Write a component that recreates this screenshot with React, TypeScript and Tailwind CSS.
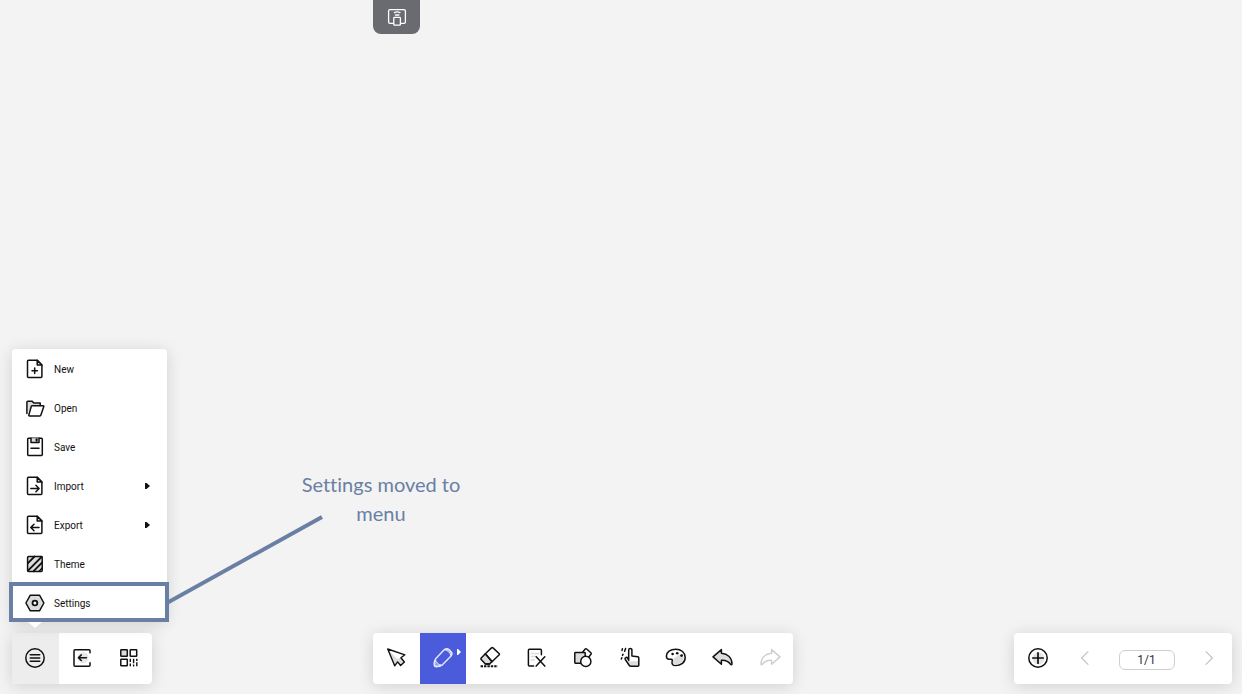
import type { ReactNode } from "react";

const Icon = ({
  children,
  className = "",
}: {
  children: ReactNode;
  className?: string;
}) => (
  <svg
    viewBox="0 0 24 24"
    fill="none"
    stroke="currentColor"
    strokeWidth="1.5"
    strokeLinecap="round"
    strokeLinejoin="round"
    aria-hidden="true"
    className={`size-6 shrink-0 ${className}`}
  >
    {children}
  </svg>
);

const shade = "#dcdcdc";

const Page = ({ children }: { children?: ReactNode }) => (
  <Icon>
    <path d="M14.2 3.3H5.5a1 1 0 0 0-1 1v15.2a1 1 0 0 0 1 1h12.4a1 1 0 0 0 1-1V8.1z" />
    <path d="M14.2 3.3v4.8h4.7z" fill={shade} />
    {children}
  </Icon>
);

const NewIcon = () => (
  <Page>
    <path d="M11.7 11v5.4M9 13.7h5.4" />
  </Page>
);

const OpenIcon = () => (
  <Icon>
    <path
      d="M4 17.2V6.2a.8.8 0 0 1 .8-.8h4.4l1.6 1.8h6.4V9.6H9.6L7 13z"
      fill={shade}
      stroke="none"
    />
    <path d="M3.9 17.4V6a.8.8 0 0 1 .8-.8h4.5l1.6 1.9h6.4v2.3" />
    <path d="M9.2 9.7h11a.6.6 0 0 1 .6.8l-2.9 8.6a1.2 1.2 0 0 1-1.1.8H6.4a.6.6 0 0 1-.6-.8l2.5-8.8a1 1 0 0 1 .9-.6z" />
  </Icon>
);

const SaveIcon = () => (
  <Icon>
    <path d="M5.5 3.2h13a.8.8 0 0 1 .8.8v15.6a.8.8 0 0 1-.8.8h-13a.8.8 0 0 1-.8-.8V4a.8.8 0 0 1 .8-.8z" />
    <path d="M8 3.2v4.4h8V3.2" fill={shade} />
    <path d="M13.6 4.2v1.6" strokeWidth="2" />
    <path d="M8 13.3h8" />
  </Icon>
);

const ImportIcon = () => (
  <Page>
    <path d="M7.8 14.5h8M12.9 11.2l3.2 3.3-3.2 3.3" />
  </Page>
);

const ExportIcon = () => (
  <Page>
    <path d="M16 14.5H8M11 11.2l-3.2 3.3 3.2 3.3" />
  </Page>
);

const ThemeIcon = () => (
  <Icon>
    <rect x="4.6" y="4.4" width="14.6" height="15" rx="1" fill={shade} />
    <path d="M5 11.2l6.4-6.6M5 18.6L18.6 4.8M10.6 19.2l8.4-8.6" strokeWidth="1.9" />
    <path d="M16 19.2l3-3" />
  </Icon>
);

const SettingsIcon = () => (
  <Icon>
    <path d="M7.3 4.2h9.2l4.4 7.8-4.4 7.8H7.3L2.9 12z" fill={shade} />
    <circle cx="11.9" cy="12" r="2.4" fill="#fff" strokeWidth="1.8" />
  </Icon>
);

const MenuIcon = () => (
  <Icon>
    <circle cx="12" cy="12" r="9.2" />
    <path d="M7.3 8.8h9.4M7.3 12h9.4M7.3 15.2h9.4" strokeWidth="1.6" />
  </Icon>
);

const ExitIcon = () => (
  <Icon>
    <circle cx="13" cy="11.6" r="5.4" fill="#e6e6e6" stroke="none" />
    <path d="M20 6.8V4.8a1 1 0 0 0-1-1H5a1 1 0 0 0-1 1v14.4a1 1 0 0 0 1 1h14a1 1 0 0 0 1-1v-2.4" />
    <path d="M16.4 11.7H8.5M11.3 8.9l-2.9 2.8 2.9 2.8" />
  </Icon>
);

const QrIcon = () => (
  <Icon>
    <rect x="3.8" y="3.8" width="6.5" height="6.5" rx=".5" fill={shade} />
    <rect x="13.2" y="3.8" width="6.5" height="6.5" rx=".5" />
    <rect x="3.8" y="13.2" width="6.5" height="6.5" rx=".5" />
    <path
      d="M13.3 13.4v2M13.3 18.2v1.4M16.6 13.4v3.2M16.6 19.2v.6M19.8 13.4v.8M19.8 17v2.6"
      strokeLinecap="square"
      strokeWidth="1.4"
    />
  </Icon>
);

const CursorIcon = () => (
  <Icon>
    <path d="M3.7 3l7 16.8 2.9-3.9 3 3.6 3.8-3.5-3.5-4.2 4-3z" fill={shade} stroke="none" />
    <path d="M4.2 3.4l9 9.6 3.7-1.2 4-3z" fill="#fff" stroke="none" />
    <path d="M3.7 3l7 16.8 2.9-3.9 3 3.6 3.8-3.5-3.5-4.2 4-3z" strokeWidth="1.4" />
  </Icon>
);

const PencilIcon = () => (
  <Icon>
    <path
      d="M13.4 3.6L4.4 13c-1 1.6-1.3 4-1.2 6 0 .9.7 1.7 1.7 1.7 2.2 0 4.8-.5 6.3-1.6l8.8-9.2c1.2-1.3 1.1-3.3-.1-4.5l-1.9-1.9c-1.3-1.2-3.4-1.2-4.6.1z"
      strokeWidth="1.4"
    />
    <path
      d="M14 3.8c1.1-1 2.7-.9 3.7.1l1.8 1.8c1 1.1 1.1 2.6.2 3.7-.6-2.7-2.6-4.9-5.7-5.6zM4.5 13.4c.3 3 2.5 5.2 6 5.7-1.5.8-4.2 1.3-5.8 1.1-.8-.2-1-.8-1-1.5 0-1.6.2-3.8.8-5.3z"
      fill="#fff"
      fillOpacity=".4"
      strokeWidth="1"
    />
  </Icon>
);

const EraserIcon = () => (
  <Icon>
    <path d="M7.4 7.7L3.2 12c-.5.6-.5 1.1 0 1.6l4.2 4.5h4.2l2.4-2.6z" fill={shade} />
    <path d="M13.5 1.9c.5-.5 1-.5 1.5 0l6 5.6c.5.5.5 1 0 1.5l-7 6.7-6.7-8z" />
    <path d="M2.6 20.2h17.2" strokeDasharray="2.4 1" strokeLinecap="butt" strokeWidth="2" />
    <path d="M7.4 18.1h4.2" />
  </Icon>
);

const ClearPageIcon = () => (
  <Icon>
    <path d="M17.4 8.7V4.2a1 1 0 0 0-1-1h-11a1 1 0 0 0-1 1v14.7a1 1 0 0 0 1 1h4.2" />
    <path d="M7.4 7.4h7M7.4 10.6h5M7.4 13.8h3" stroke={shade} />
    <path d="M12.2 10.8l8.6 9.3M20.8 10.8l-8.6 9.3" />
  </Icon>
);

const ShapesIcon = () => (
  <Icon>
    <path d="M11.6 6.2l2.6-3.1a1 1 0 0 1 1.5-.1l4.2 3.8a1 1 0 0 1 .1 1.4l-2.2 2.8" />
    <rect x="3.8" y="6.4" width="10.4" height="10.8" rx=".6" fill={shade} />
    <circle cx="14.8" cy="15.4" r="5.1" fill="#fff" />
  </Icon>
);

const HandIcon = () => (
  <Icon>
    <path d="M9.8 15.2h11v4a1 1 0 0 1-1 1h-8.1z" fill={shade} stroke="none" />
    <path d="M10.7 14.4V4a1.6 1.6 0 0 1 3.2 0v6.1l5.8.6c.7.1 1.1.5 1.1 1.2v7.3a1 1 0 0 1-1 1h-7.1c-.6 0-1-.2-1.4-.7l-4-6c-.5-.9-.2-1.6.5-1.9.7-.4 1.4-.1 1.9.6z" />
    <path d="M4.4 2.8l-.4 1.6M7.6 2.4L6.6 5.2M5 8.2l-.5 1.2M3.8 11.8l-.5 1.2" />
  </Icon>
);

const PaletteIcon = () => (
  <Icon>
    <path
      d="M11.8 3.3C6.3 3.3 2.4 6 2.4 10c0 2 1 3.3 2.8 3.3h1.9c1 0 1.4.6 1.1 1.6-.8 2.8.4 4.7 3.2 4.7 5.7 0 9.8-3.3 9.8-8.2 0-4.8-4-8.1-9.4-8.1z"
      fill="#fff"
    />
    <path
      d="M9.5 12.4l6-3.8 4.5 2.8c-.7 4.2-4.2 7.2-8.8 7.3-2 0-2.7-1.6-2.1-3.9z"
      fill={shade}
      stroke="none"
    />
    <g fill="currentColor" stroke="none">
      <circle cx="8.6" cy="8" r="1.3" />
      <circle cx="13.2" cy="7.2" r="1.3" />
      <circle cx="17.6" cy="9.6" r="1.4" />
    </g>
  </Icon>
);

const UndoIcon = ({ flipped = false }: { flipped?: boolean }) => (
  <Icon className={flipped ? "-scale-x-100" : ""}>
    <path
      d="M10.4 3.6L2 10.9l8.4 7.3v-4c4.3-.2 7.2 1 9.2 4.2.4.5 1.4.4 1.4-.4-.1-6.3-4.2-10.3-10.6-10.8z"
      fill={flipped ? "none" : shade}
    />
  </Icon>
);

const AddIcon = () => (
  <Icon>
    <circle cx="12.5" cy="12.5" r="6" fill="#e6e6e6" stroke="none" />
    <circle cx="12" cy="12" r="9.2" />
    <path d="M12 6.8v10.4M6.8 12h10.4" strokeWidth="1.7" />
  </Icon>
);

const ChevronIcon = ({ flipped = false }: { flipped?: boolean }) => (
  <Icon className={flipped ? "-scale-x-100" : ""}>
    <path d="M15 5.6L8.6 12l6.4 6.4" strokeWidth="1.2" />
  </Icon>
);

const LockIcon = () => (
  <Icon>
    <path d="M8.5 18.4H5a1.4 1.4 0 0 1-1.4-1.4V6A1.4 1.4 0 0 1 5 4.6h14A1.4 1.4 0 0 1 20.4 6v11a1.4 1.4 0 0 1-1.4 1.4h-3" strokeWidth="1.3" />
    <path d="M9.4 7.6c1.6-.8 3.9-.8 5.5 0M10.4 10h3.5" strokeWidth="1.3" />
    <rect x="8.8" y="12.4" width="6.6" height="7.8" rx=".8" strokeWidth="1.3" />
  </Icon>
);

const menuItems = [
  { label: "New", icon: <NewIcon /> },
  { label: "Open", icon: <OpenIcon /> },
  { label: "Save", icon: <SaveIcon /> },
  { label: "Import", icon: <ImportIcon />, submenu: true },
  { label: "Export", icon: <ExportIcon />, submenu: true },
  { label: "Theme", icon: <ThemeIcon /> },
  { label: "Settings", icon: <SettingsIcon />, highlighted: true },
];

const tools = [
  { label: "Select", icon: <CursorIcon /> },
  { label: "Pen", icon: <PencilIcon />, active: true },
  { label: "Eraser", icon: <EraserIcon /> },
  { label: "Clear page", icon: <ClearPageIcon /> },
  { label: "Shapes", icon: <ShapesIcon /> },
  { label: "Gestures", icon: <HandIcon /> },
  { label: "Background", icon: <PaletteIcon /> },
  { label: "Undo", icon: <UndoIcon /> },
  { label: "Redo", icon: <UndoIcon flipped />, disabled: true },
];

// Outline around a menu row, with a line leading to its caption
const Callout = ({ text }: { text: string }) => (
  <div className="pointer-events-none absolute -top-px -right-0.5 bottom-0 -left-[3px] border-4 border-[#6a7fa4]">
    <svg
      viewBox="0 0 158 92"
      className="absolute bottom-3 left-full h-[92px] w-[158px]"
      aria-hidden="true"
    >
      <path d="M0 90L157 3" stroke="#6a7fa4" strokeWidth="4" />
    </svg>
    <p className="absolute bottom-[90px] left-[273px] w-[190px] text-center font-['Lato',sans-serif] text-[20px] leading-[29px] text-[#6a7fa4] [font-variant-ligatures:none]">
      {text}
    </p>
  </div>
);

const Menu = () => (
  <nav
    aria-label="Main menu"
    className="absolute bottom-full left-0 mb-[11px] w-[155px] rounded bg-white shadow-[0_2px_16px_rgba(0,0,0,0.14)]"
  >
    <div className="absolute top-full left-4 border-x-[7px] border-t-[6px] border-x-transparent border-t-white" />
    <ul>
      {menuItems.map((item) => (
        <li key={item.label} className="relative">
          <button className="flex h-[39px] w-full items-center gap-[7px] pt-px pr-[17px] pl-[11px] text-left text-[10px]">
            {item.icon}
            <span className="flex-1">{item.label}</span>
            {item.submenu && (
              <svg viewBox="0 0 5 6" className="h-[6px] w-[5px]" aria-hidden="true">
                <path d="M0 0h1.5L5 3 1.5 6H0z" fill="currentColor" />
              </svg>
            )}
          </button>
          {item.highlighted && <Callout text="Settings moved to menu" />}
        </li>
      ))}
    </ul>
  </nav>
);

const barClass =
  "flex h-[51px] rounded bg-white shadow-[0_2px_16px_rgba(0,0,0,0.14)]";
const buttonClass = "flex flex-1 items-center justify-center pb-px";
const pageButtonClass =
  "flex w-[47px] items-center justify-center pb-px disabled:text-[#c4c4c4]";

export default function App() {
  return (
    <div className="flex min-h-screen flex-col justify-between overflow-hidden bg-[#f3f3f3] pr-[10px] pb-[10px] pl-3 font-['Roboto',sans-serif] text-[#111]">
      <header className="flex justify-between">
        <div className="w-[140px]" />
        <div className="w-[420px]">
          <button
            aria-label="Lock screen"
            className="flex h-[34px] w-[47px] items-center justify-center rounded-b-lg bg-[#696b70] text-white"
          >
            <LockIcon />
          </button>
        </div>
        <div className="w-[218px]" />
      </header>

      <footer className="flex items-end justify-between">
        <div className={`relative w-[140px] ${barClass}`}>
          <Menu />
          <button aria-label="Menu" className={`rounded-l bg-[#ededed] ${buttonClass}`}>
            <MenuIcon />
          </button>
          <button aria-label="Exit" className={buttonClass}>
            <ExitIcon />
          </button>
          <button aria-label="Share by QR code" className={buttonClass}>
            <QrIcon />
          </button>
        </div>

        <div className={`w-[420px] ${barClass}`}>
          {tools.map((tool) => (
            <button
              key={tool.label}
              aria-label={tool.label}
              disabled={tool.disabled}
              className={`relative disabled:text-[#cfcfcf] ${buttonClass} ${
                tool.active ? "bg-[#4a5cdb] text-[#e4e8ff]" : ""
              }`}
            >
              {tool.icon}
              {tool.active && (
                <svg
                  viewBox="0 0 4 6"
                  className="absolute top-4 right-[5px] h-[6px] w-[4px]"
                  aria-hidden="true"
                >
                  <path d="M0 0h1l3 3-3 3H0z" fill="#fff" />
                </svg>
              )}
            </button>
          ))}
        </div>

        <div className={`w-[218px] ${barClass}`}>
          <button aria-label="Add page" className={pageButtonClass}>
            <AddIcon />
          </button>
          <button aria-label="Previous page" disabled className={pageButtonClass}>
            <ChevronIcon />
          </button>
          <div className="flex flex-1 items-center justify-center pt-[3px]">
            <input
              aria-label="Page"
              defaultValue="1/1"
              className="h-5 w-14 rounded-md border border-[#cfcfcf] bg-white text-center text-[12px] text-[#333]"
            />
          </div>
          <button aria-label="Next page" disabled className={pageButtonClass}>
            <ChevronIcon flipped />
          </button>
        </div>
      </footer>
    </div>
  );
}
